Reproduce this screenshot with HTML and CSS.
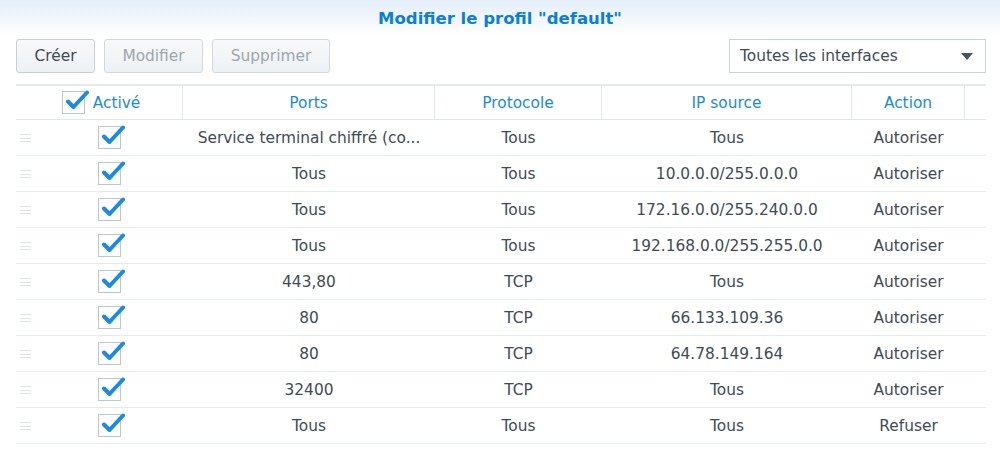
FILE: index.html
```html
<!DOCTYPE html>
<html lang="fr">
<head>
<meta charset="utf-8">
<title>Modifier le profil</title>
<link rel="stylesheet" href="styles.css">
</head>
<body>
<div class="window">
  <header class="titlebar">Modifier le profil "default"</header>
  <div class="toolbar">
    <div class="btns">
      <button class="btn">Créer</button>
      <button class="btn disabled">Modifier</button>
      <button class="btn disabled">Supprimer</button>
    </div>
    <div class="select">
      <span>Toutes les interfaces</span>
      <svg class="caret" width="12" height="7" viewBox="0 0 12 7"><path d="M0 0h12L6 7z" fill="#4a545e"/></svg>
    </div>
  </div>
  <div class="grid">
    <div class="row head">
      <div class="cell first"><span class="cb"><svg viewBox="0 0 24 24" class="tick"><path d="M3 12.5l5.5 5.5L22 3.5" /></svg></span><span>Activé</span></div>
      <div class="cell">Ports</div>
      <div class="cell">Protocole</div>
      <div class="cell">IP source</div>
      <div class="cell">Action</div>
      <div class="cell last"></div>
    </div>
    <div class="row"><div class="cell first"><span class="handle"></span><span class="cb"><svg viewBox="0 0 24 24" class="tick"><path d="M3 12.5l5.5 5.5L22 3.5" /></svg></span></div><div class="cell">Service terminal chiffré (co...</div><div class="cell">Tous</div><div class="cell">Tous</div><div class="cell">Autoriser</div><div class="cell last"></div></div>
    <div class="row"><div class="cell first"><span class="handle"></span><span class="cb"><svg viewBox="0 0 24 24" class="tick"><path d="M3 12.5l5.5 5.5L22 3.5" /></svg></span></div><div class="cell">Tous</div><div class="cell">Tous</div><div class="cell">10.0.0.0/255.0.0.0</div><div class="cell">Autoriser</div><div class="cell last"></div></div>
    <div class="row"><div class="cell first"><span class="handle"></span><span class="cb"><svg viewBox="0 0 24 24" class="tick"><path d="M3 12.5l5.5 5.5L22 3.5" /></svg></span></div><div class="cell">Tous</div><div class="cell">Tous</div><div class="cell">172.16.0.0/255.240.0.0</div><div class="cell">Autoriser</div><div class="cell last"></div></div>
    <div class="row"><div class="cell first"><span class="handle"></span><span class="cb"><svg viewBox="0 0 24 24" class="tick"><path d="M3 12.5l5.5 5.5L22 3.5" /></svg></span></div><div class="cell">Tous</div><div class="cell">Tous</div><div class="cell">192.168.0.0/255.255.0.0</div><div class="cell">Autoriser</div><div class="cell last"></div></div>
    <div class="row"><div class="cell first"><span class="handle"></span><span class="cb"><svg viewBox="0 0 24 24" class="tick"><path d="M3 12.5l5.5 5.5L22 3.5" /></svg></span></div><div class="cell">443,80</div><div class="cell">TCP</div><div class="cell">Tous</div><div class="cell">Autoriser</div><div class="cell last"></div></div>
    <div class="row"><div class="cell first"><span class="handle"></span><span class="cb"><svg viewBox="0 0 24 24" class="tick"><path d="M3 12.5l5.5 5.5L22 3.5" /></svg></span></div><div class="cell">80</div><div class="cell">TCP</div><div class="cell">66.133.109.36</div><div class="cell">Autoriser</div><div class="cell last"></div></div>
    <div class="row"><div class="cell first"><span class="handle"></span><span class="cb"><svg viewBox="0 0 24 24" class="tick"><path d="M3 12.5l5.5 5.5L22 3.5" /></svg></span></div><div class="cell">80</div><div class="cell">TCP</div><div class="cell">64.78.149.164</div><div class="cell">Autoriser</div><div class="cell last"></div></div>
    <div class="row"><div class="cell first"><span class="handle"></span><span class="cb"><svg viewBox="0 0 24 24" class="tick"><path d="M3 12.5l5.5 5.5L22 3.5" /></svg></span></div><div class="cell">32400</div><div class="cell">TCP</div><div class="cell">Tous</div><div class="cell">Autoriser</div><div class="cell last"></div></div>
    <div class="row"><div class="cell first"><span class="handle"></span><span class="cb"><svg viewBox="0 0 24 24" class="tick"><path d="M3 12.5l5.5 5.5L22 3.5" /></svg></span></div><div class="cell">Tous</div><div class="cell">Tous</div><div class="cell">Tous</div><div class="cell">Refuser</div><div class="cell last"></div></div>
  </div>
</div>
</body>
</html>
```

FILE: styles.css
```css
* { box-sizing: border-box; }
html, body { margin: 0; padding: 0; background: #fff; }
body {
  font-family: "DejaVu Sans", Verdana, sans-serif;
  font-size: 15.4px;
  color: #414b55;
}
.window { width: 1000px; height: 463px; overflow: hidden; }
.titlebar {
  height: 35px;
  display: flex;
  align-items: center;
  justify-content: center;
  font-weight: bold;
  font-size: 16.5px;
  color: #0b7fd8;
  background: linear-gradient(#e3eef9, #f6f9fd 70%, #ffffff);
  padding-top: 1px;
}
.toolbar {
  display: flex;
  justify-content: space-between;
  padding: 4px 14px 0 16px;
  height: 49px;
}
.btns { display: flex; gap: 9px; }
.btn {
  height: 34px;
  padding: 0;
  font: inherit;
  color: #414b55;
  border: 1px solid #c6ced6;
  border-radius: 3px;
  background: linear-gradient(#f7f9fa, #eef1f4);
}
.btn:first-child { width: 79px; }
.btn:nth-child(2) { width: 99px; }
.btn:nth-child(3) { width: 118px; }
.btn.disabled { color: #9ea6ae; border-color: #d3d9df; }
.select {
  width: 257px;
  height: 34px;
  border: 1px solid #c9d1d9;
  display: flex;
  align-items: center;
  justify-content: space-between;
  padding: 0 12px 0 10px;
  color: #414b55;
}
.caret { display: block; }
.grid { margin-left: 16px; width: 970px; border-top: 2px solid #e4eaf0; }
.row {
  display: grid;
  grid-template-columns: 167px 252px 167px 250px 113px 21px;
  height: 36px;
  border-bottom: 1px solid #e6ebf0;
}
.row.head { height: 34px; border-bottom: 1px solid #dfe6ed; }
.cell {
  display: flex;
  align-items: center;
  justify-content: center;
  white-space: nowrap;
}
.head .cell { color: #1a8ae2; border-right: 1px solid #e1e8ef; }
.head .cell.last { border-right: none; }
.head .cell.first { gap: 8px; padding-left: 4px; }
.row:not(.head) .cell.first { justify-content: flex-start; position: relative; }
.handle {
  position: absolute;
  left: 4px;
  top: 14px;
  width: 11px;
  height: 8px;
  border-top: 1px solid #dde2e7;
  border-bottom: 1px solid #dde2e7;
}
.handle::after {
  content: "";
  position: absolute;
  left: 0; right: 0; top: 2.5px;
  border-top: 1px solid #dde2e7;
}
.cb {
  position: relative;
  width: 23px;
  height: 23px;
  border: 1px solid #bcc6d0;
  background: #fff;
  display: inline-block;
  flex: none;
}
.row:not(.head) .cb { margin-left: 82px; }
.tick {
  position: absolute;
  left: 2px;
  top: -3px;
  width: 24px;
  height: 24px;
  fill: none;
  stroke: #1a8ae2;
  stroke-width: 4;
  stroke-linecap: round;
  stroke-linejoin: round;
}
```
